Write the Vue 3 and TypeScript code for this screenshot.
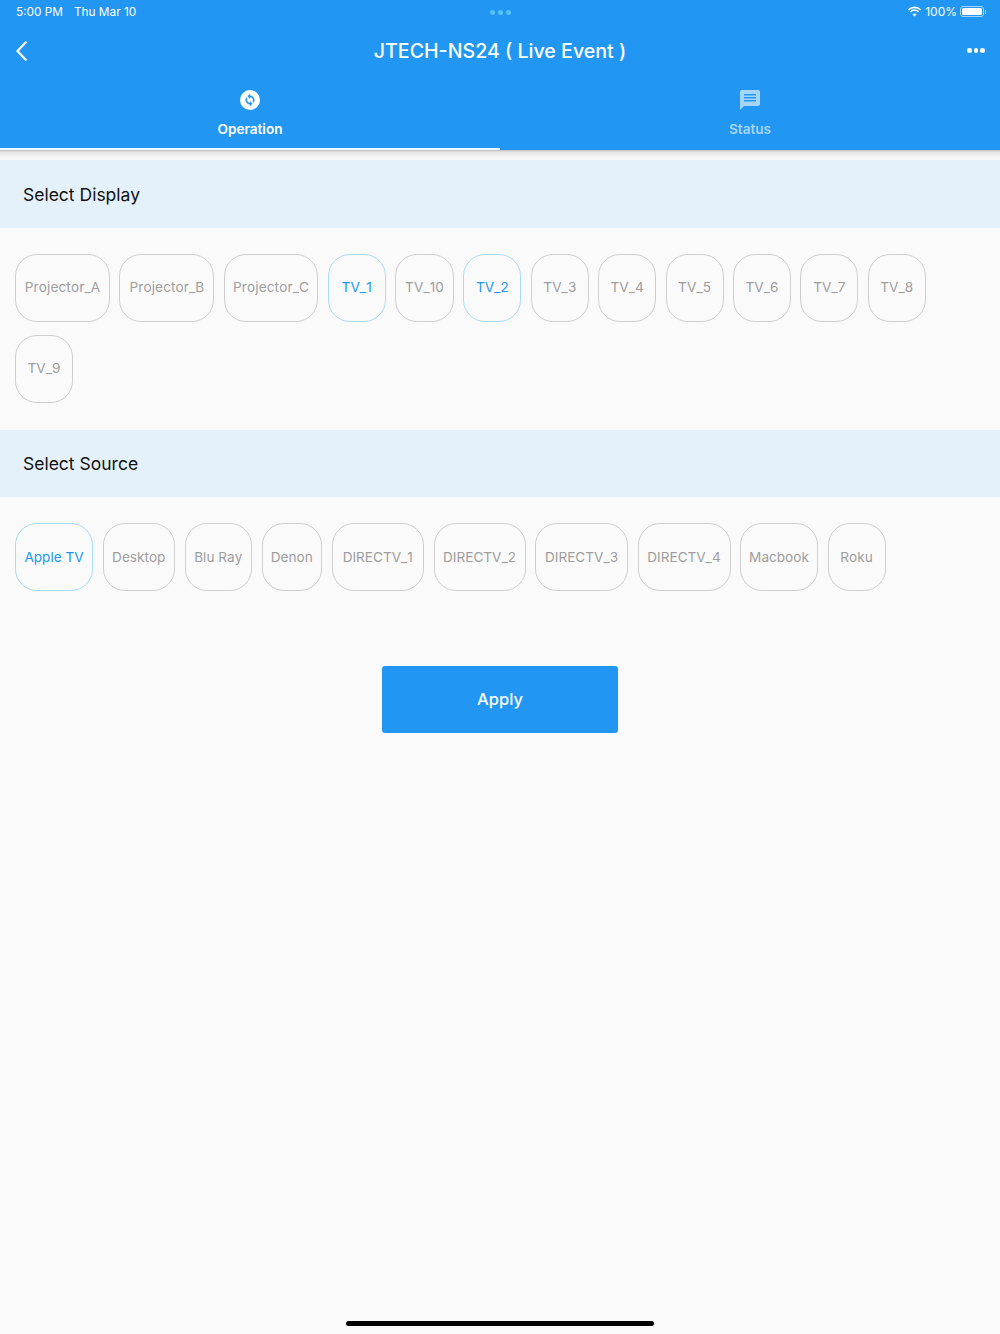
<script setup lang="ts">
interface Chip { label: string; w: number; active?: boolean }
const displays: Chip[] = [
  { label: 'Projector_A', w: 95 }, { label: 'Projector_B', w: 95 }, { label: 'Projector_C', w: 94.5 },
  { label: 'TV_1', w: 58, active: true }, { label: 'TV_10', w: 59 }, { label: 'TV_2', w: 58, active: true },
  { label: 'TV_3', w: 58 }, { label: 'TV_4', w: 58 }, { label: 'TV_5', w: 58 }, { label: 'TV_6', w: 58 },
  { label: 'TV_7', w: 58 }, { label: 'TV_8', w: 58 }, { label: 'TV_9', w: 58 },
]
const sources: Chip[] = [
  { label: 'Apple TV', w: 78, active: true }, { label: 'Desktop', w: 72.5 }, { label: 'Blu Ray', w: 67.5 },
  { label: 'Denon', w: 60.5 }, { label: 'DIRECTV_1', w: 92.5 }, { label: 'DIRECTV_2', w: 92 },
  { label: 'DIRECTV_3', w: 93 }, { label: 'DIRECTV_4', w: 93 }, { label: 'Macbook', w: 78 }, { label: 'Roku', w: 58 },
]
</script>

<template>
  <div class="page">
    <header class="header">
      <div class="status">
        <div class="status-left"><span>5:00 PM</span><span>Thu Mar 10</span></div>
        <div class="multitask"><i></i><i></i><i></i></div>
        <div class="status-right">
          <svg width="15" height="11" viewBox="0 0 15 11">
            <path d="M7.5 2.2c2.1 0 4 .8 5.5 2.2l1.1-1.2A9.6 9.6 0 0 0 7.5.5 9.6 9.6 0 0 0 .9 3.2L2 4.4a8 8 0 0 1 5.5-2.2z" fill="#fff"/>
            <path d="M7.5 5c1.3 0 2.5.5 3.5 1.4l1.1-1.2a6.7 6.7 0 0 0-9.2 0L4 6.4C5 5.5 6.200 5 7.500 5z" fill="#fff"/>
            <path d="M7.500 7.600c-.8 0-1.500.3-2 .8l2 2.100 2-2.100c-.5-.5-1.200-.8-2-.8z" fill="#fff"/>
          </svg>
          <span>100%</span>
          <div class="battery"><div class="battery-fill"></div></div>
          <div class="battery-cap"></div>
        </div>
      </div>
      <div class="navbar">
        <svg class="back" width="14" height="22" viewBox="0 0 14 22">
          <path d="M11.500 1.500 2.500 11l9 9.500" fill="none" stroke="#fff" stroke-width="2.200"/>
        </svg>
        <h1 class="title">JTECH-NS24 ( Live Event )</h1>
        <div class="more"><i></i><i></i><i></i></div>
      </div>
      <div class="tabs">
        <div class="tab tab-on">
          <svg width="20" height="20" viewBox="0 0 20 20">
            <circle cx="10" cy="10" r="10" fill="#fff"/>
            <path d="M10 5.700V4l-2.300 2.300L10 8.600V6.900a3.100 3.100 0 0 1 2.700 4.600l.9.900A4.300 4.300 0 0 0 10 5.700zM7.300 8.500l-.9-.9A4.300 4.300 0 0 0 10 14.300V16l2.300-2.300L10 11.400v1.700a3.100 3.100 0 0 1-2.700-4.600z" fill="#2196f3" stroke="#2196f3" stroke-width=".4"/>
          </svg>
          <span>Operation</span>
        </div>
        <div class="tab tab-off">
          <svg width="20" height="20" viewBox="0 0 20 20">
            <path d="M1.800 0h16.400C19.200 0 20 .8 20 1.800v12.400c0 1-.8 1.800-1.800 1.800H4l-4 4V1.800C0 .8.800 0 1.800 0z" fill="#a6d5fa"/>
            <path d="M4 4h12v1.500H4zM4 7h12v1.500H4zM4 10h12v1.500H4z" fill="#2196f3"/>
          </svg>
          <span>Status</span>
        </div>
      </div>
    </header>
    <div class="shadow"></div>

    <section class="band">Select Display</section>
    <div class="chips chips-display">
      <div v-for="c in displays" :key="c.label" class="chip" :class="{ active: c.active }" :style="{ width: c.w + 'px' }">{{ c.label }}</div>
    </div>

    <section class="band">Select Source</section>
    <div class="chips chips-source">
      <div v-for="c in sources" :key="c.label" class="chip" :class="{ active: c.active }" :style="{ width: c.w + 'px' }">{{ c.label }}</div>
    </div>

    <div class="apply-wrap"><button class="apply">Apply</button></div>
    <div class="spacer"></div>
    <div class="home"></div>
  </div>
</template>

<style>
html, body { margin: 0; background: #fafafa; }
</style>

<style scoped>
.page {
  width: 1000px; height: 1334px; background: #fafafa; overflow: hidden;
  display: flex; flex-direction: column;
  font-family: Inter, "Liberation Sans", sans-serif;
}
.header { background: #2196f3; height: 150px; display: flex; flex-direction: column; color: #fff; flex: none; }
.status { height: 23px; display: flex; align-items: center; justify-content: space-between; padding: 0 16px; position: relative; font-size: 11.800px; }
.status-left { display: flex; gap: 11px; }
.status-right { display: flex; align-items: center; gap: 3px; margin-right: 1px; }
.status-right svg { margin-right: 0.500px; }
.status-right span { font-size: 12px; }
.multitask { position: absolute; left: 490px; top: 10px; display: flex; gap: 3px; }
.multitask i { width: 5px; height: 5px; border-radius: 50%; background: #56c0f8; }
.battery { width: 24px; height: 11px; box-sizing: border-box; border: 1px solid #a6d5fa; border-radius: 3px; padding: 1px; }
.battery-fill { width: 100%; height: 100%; background: #fff; border-radius: 1.500px; }
.battery-cap { width: 1px; height: 4px; background: #a6d5fa; margin-left: -2px; margin-right: -3px; }
.navbar { height: 55px; display: flex; align-items: center; justify-content: space-between; padding: 0 16px; position: relative; }
.back { margin-left: -1px; }
.title { position: absolute; left: 0; right: 0; top: 1px; line-height: 55px; margin: 0; text-align: center; font-size: 19.600px; font-weight: 500; }
.more { display: flex; gap: 2px; margin-right: -0.500px; }
.more i { width: 4.500px; height: 4.500px; border-radius: 50%; background: #fff; }
.tabs { flex: 1; display: flex; }
.tab { flex: 1; display: flex; flex-direction: column; align-items: center; padding-top: 12px; font-size: 13.600px; font-weight: 600; gap: 11px; box-sizing: border-box; }
.tab-on { border-bottom: 2px solid #eef7fe; }
.tab-off { color: #a6d5fa; }
.shadow { height: 10px; flex: none; background: linear-gradient(#bdbdbd, #e4e4e4 20%, #f3f3f3 60%, #fafafa); }
.band { flex: none; height: 67.500px; box-sizing: border-box; padding: 0.500px 0 0 23px; display: flex; align-items: center; background: #e4f1fa; color: #111; font-size: 17.500px; }
.chips { display: flex; flex-wrap: wrap; gap: 13px 9.400px; padding: 26px 15px 27px; }
.chip {
  height: 68px; box-sizing: border-box; border: 1px solid #cfcfcf; border-radius: 22px;
  display: flex; align-items: center; justify-content: center;
  color: #9e9e9e; font-size: 13.600px; white-space: nowrap;
  font-kerning: none; font-feature-settings: "calt" 0, "kern" 0;
}
.chips-display .chip { padding-bottom: 2px; letter-spacing: 0.100px; }
.chips-source { column-gap: 9.500px; }
.chip.active { border-color: #a8dcfb; color: #2196f3; }
.apply-wrap { display: flex; justify-content: center; margin-top: 48px; }
.apply { width: 236px; height: 67px; border: 0; border-radius: 3px; background: #2196f3; color: #fff; font: 500 16.500px Inter, sans-serif; padding: 0 0 1px; }
.spacer { flex: 1; }
.home { width: 308px; height: 5px; border-radius: 3px; background: #000; margin: 0 auto 8px; }
</style>
